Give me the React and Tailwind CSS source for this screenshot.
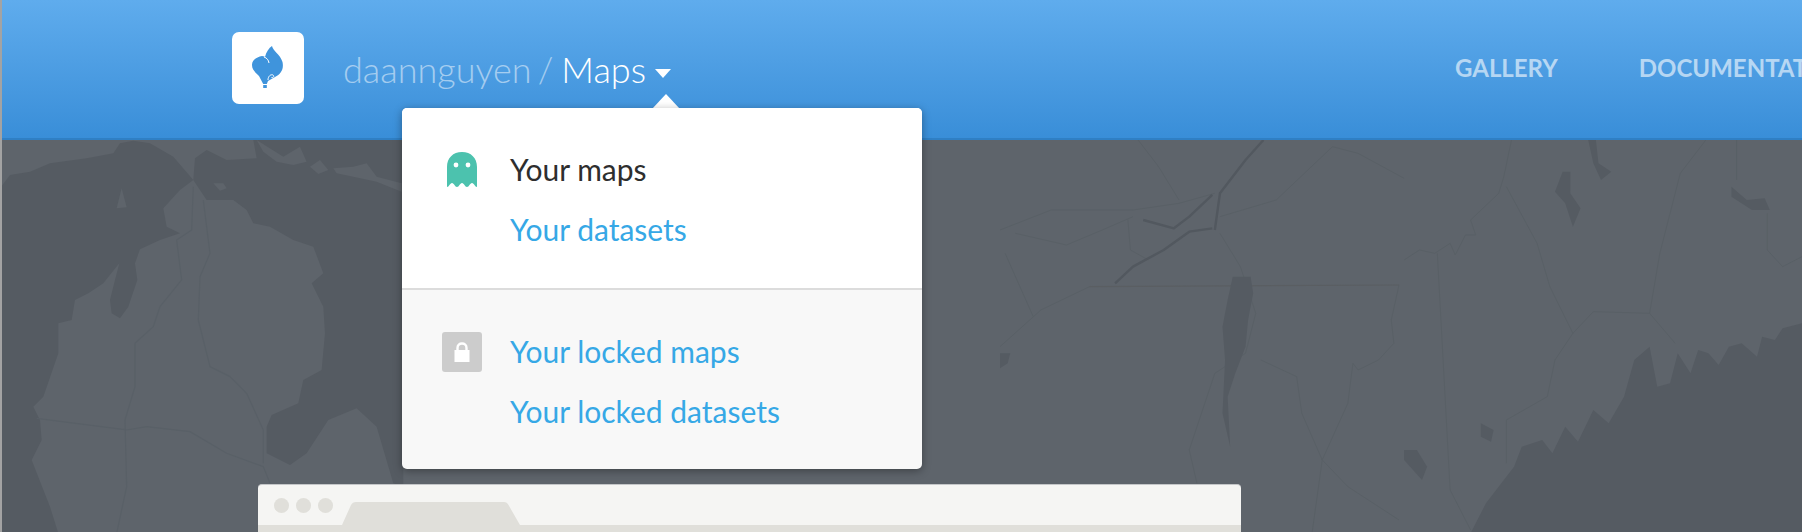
import React from 'react';

const fontLato = { fontFamily: 'Lato, "Open Sans", sans-serif' };

// left half of the map, in crop units
const leftWater = [
  'M0 205 L30 165 L90 155 L150 130 L260 115 L340 100 L360 70 L400 62 L450 70 L520 110 L580 180 L540 210 L490 265 L500 320 L540 340 L480 360 L420 388 L405 430 L412 480 L385 560 L360 595 L335 580 L330 540 L345 480 L358 430 L310 490 L265 520 L225 540 L215 600 L175 610 L175 700 L130 830 L100 860 L120 900 L125 960 L95 1020 L150 1160 L175 1240 L0 1240 Z',
  'M580 180 L585 115 L620 90 L680 120 L770 115 L760 60 L1210 60 L1210 1100 L1180 1090 L1130 920 L1070 865 L985 900 L920 1000 L870 1035 L800 1000 L800 920 L815 885 L895 850 L910 780 L965 750 L975 640 L970 560 L935 490 L970 460 L940 380 L880 360 L810 320 L760 310 L740 270 L700 240 L620 240 Z',
];
const leftLand = [
  'M350 265 L365 205 L380 262 Z',
  'M640 190 L670 190 L680 205 L660 212 Z',
  'M770 60 L850 110 L900 80 L920 125 L880 135 L830 125 L790 95 Z',
  'M930 140 L960 120 L985 150 L955 162 Z',
  'M1000 145 L1060 140 L1100 130 L1130 170 L1205 190 L1205 215 L1130 185 L1060 170 L1010 160 Z',
];
const leftLines = [
  'M580 200 L575 330 L530 360 L545 480 L480 560 L460 620 L405 670 L405 800 L375 900 L380 1100 L350 1240',
  'M610 240 L630 400 L600 470 L595 600 L630 740 L690 770 L740 820 L790 930 L790 1030',
  'M110 895 L380 930 L440 920 L570 935 L680 1000 L790 1040 L810 1090',
];

// right half of the map, in crop units
const rightSea = 'M1568 610 L1530 625 L1515 660 L1490 650 L1480 710 L1450 670 L1425 680 L1405 735 L1385 700 L1365 690 L1350 760 L1325 700 L1310 790 L1285 800 L1270 680 L1240 720 L1220 830 L1190 910 L1160 870 L1130 965 L1105 920 L1080 1000 L1060 960 L1020 980 L1005 1040 L985 1080 L950 1150 L920 1240 L1568 1240 Z';
const rightLakes = [
  'M455 470 L490 470 L495 520 L485 600 L480 680 L460 760 L445 830 L450 980 L435 880 L440 720 L435 620 L445 540 Z',
  'M1150 60 L1165 60 L1170 130 L1195 155 L1175 180 L1160 130 Z',
  'M1100 155 L1115 155 L1115 220 L1135 265 L1120 320 L1105 250 L1085 215 Z',
  'M1430 200 L1460 240 L1495 235 L1505 270 L1470 270 L1430 230 Z',
  'M940 910 L965 930 L960 965 L940 950 Z',
  'M790 990 L815 990 L835 1040 L825 1080 L790 1020 Z',
  'M0 700 L20 700 L15 730 L0 745 Z',
];
const rivers = [
  'M515 60 L480 120 L430 220 L420 330',
  'M225 490 L260 440 L320 390 L370 335 L415 325',
  'M280 300 L340 325 L370 290 L415 225',
];
const rightLines = [
  'M790 420 L820 390 L850 400 L880 370 L890 405 L910 345 L930 345 L920 300 L975 220 L985 170 L1000 60',
  'M780 495 L765 600 L770 670 L740 720 L700 750 L690 730 L680 850 L630 1020 L610 1240',
  'M510 720 L580 770 L590 880 L630 1020 L680 1100 L780 1200',
  'M990 200 L1050 370 L1075 500 L1120 640 L1085 720 L1070 830 L990 900 L990 1030',
  'M1120 640 L1160 575 L1270 580 L1290 400 L1330 160 L1380 60',
  'M1270 580 L1320 670',
  'M1440 60 L1440 180',
  'M1500 280 L1500 390 L1530 440 L1568 410',
  'M0 330 L100 270 L260 270 L350 250 L420 220',
  'M30 340 L130 375 L200 330 L260 290',
  'M250 300 L255 390 L290 420',
  'M270 60 L310 140 L350 240',
  'M430 290 L540 240 L650 80 L700 100 L790 175',
  'M430 340 L470 440 L500 580 L480 700 L420 760 L370 990 L385 1090',
  'M0 680 L80 570 L175 500',
  'M10 400 L65 590',
  'M855 400 L880 1110 L920 1230',
];

const MapBackground = () => (
  <svg className="absolute left-[-2px] top-0 blur-[0.7px]" width="1802" height="532" viewBox="0 0 1802 532">
    <rect width="1802" height="532" fill="#5e646b" />
    <g transform="translate(0 120) scale(0.3333)" strokeLinejoin="round">
      {leftWater.map((d) => <path key={d} d={d} fill="#555b62" />)}
      {leftLand.map((d) => <path key={d} d={d} fill="#5e646b" />)}
      {leftLines.map((d) => (
        <path key={d} d={d} fill="none" stroke="#596067" strokeWidth="1.2" vectorEffect="non-scaling-stroke" />
      ))}
    </g>
    <g transform="translate(1000 120) scale(0.5115 0.3333)" strokeLinejoin="round">
      <path d={rightSea} fill="#555b62" />
      {rightLines.map((d) => (
        <path key={d} d={d} fill="none" stroke="#596066" strokeWidth="1" vectorEffect="non-scaling-stroke" />
      ))}
      <path d="M175 500 L780 495" fill="none" stroke="#5a5e62" strokeWidth="1.2" vectorEffect="non-scaling-stroke" />
      {rightLakes.map((d) => <path key={d} d={d} fill="#555b62" />)}
      {rivers.map((d) => (
        <path key={d} d={d} fill="none" stroke="#52585f" strokeWidth="2.4" vectorEffect="non-scaling-stroke" />
      ))}
    </g>
  </svg>
);

const Logo = () => (
  <div className="w-[72px] h-[72px] bg-white rounded-[7px] shrink-0">
    <svg width="72" height="72" viewBox="0 0 72 72">
      <path
        d="M40 14 C41 19 48 22 50.5 30 C52 37 49 42 43 45 L36 49 L34.8 52 L31.2 52 L27 44 C24 41 20 38 20 33 C20 28 25 25 30 24 C32 24 33 25 33 25 C34 20 37 16 40 14 Z"
        fill="#3f94dc"
      />
      <path d="M32 25 C35 26 36.5 28 37 31" fill="none" stroke="#ffffff" strokeWidth="1" />
      <path d="M36 48 C36 44 39 42 41 43 C42.5 44 41.5 46 39.5 45.5" fill="none" stroke="#ffffff" strokeWidth="1" />
      <rect x="31.2" y="53" width="3.6" height="3" fill="#3f94dc" />
    </svg>
  </div>
);

const Ghost = () => (
  <svg width="30" height="36" viewBox="0 0 30 36" className="shrink-0">
    <path
      d="M0 15 C0 6 6 0 15 0 C24 0 30 6 30 15 L30 35 C28 35 27 31 25 31 C23 31 22 35 20 35 C18 35 17 31 15 31 C13 31 12 35 10 35 C8 35 7 31 5 31 C3 31 2 35 0 35 Z"
      fill="#4cc2ae"
    />
    <circle cx="9" cy="13" r="2.4" fill="#ffffff" />
    <circle cx="21" cy="13" r="2.4" fill="#ffffff" />
  </svg>
);

const LockBadge = () => (
  <div className="w-[40px] h-[40px] bg-[#cccccc] rounded-[3px] flex items-center justify-center shrink-0">
    <svg width="16" height="20" viewBox="0 0 16 20">
      <path d="M3.5 9 L3.5 6 C3.5 3 5.5 1.5 8 1.5 C10.5 1.5 12.5 3 12.5 6 L12.5 9" fill="none" stroke="#ffffff" strokeWidth="2.4" />
      <rect x="0.5" y="8" width="15" height="12" fill="#ffffff" />
    </svg>
  </div>
);

const MenuRow = ({ icon, active, children }) => (
  <div className="flex items-center h-[60px]">
    <div className="w-[108px] pl-[40px] flex items-center shrink-0">{icon}</div>
    <span className={`text-[30px] leading-none pb-[3px] ${active ? 'text-[#2e2e2e]' : 'text-[#36a8e6]'}`}>{children}</span>
  </div>
);

const Dropdown = () => (
  <div className="absolute left-[400px] top-[108px] w-[520px] h-[361px] z-10" style={fontLato}>
    <svg className="absolute left-[250px] top-[-14px]" width="28" height="15" viewBox="0 0 28 15">
      <path d="M0 15 L14 0 L28 15 Z" fill="#ffffff" />
    </svg>
    <div className="relative h-full bg-[#f8f8f8] rounded-[5px] overflow-hidden shadow-[0_2px_8px_rgba(0,0,0,0.35)]">
      <div className="bg-white pt-[32px] pb-[28px] border-b-2 border-[#dcdcdc]">
        <MenuRow icon={<div className="pl-[5px]"><Ghost /></div>} active>Your maps</MenuRow>
        <MenuRow>Your datasets</MenuRow>
      </div>
      <div className="pt-[32px]">
        <MenuRow icon={<LockBadge />}>Your locked maps</MenuRow>
        <MenuRow>Your locked datasets</MenuRow>
      </div>
    </div>
  </div>
);

const BrowserMock = () => (
  <div className="relative ml-[256px] w-[983px] pt-[344px]">
    <div className="rounded-t-[4px] border-t border-[#c4c6c8] bg-[#f5f5f3]">
      <div className="flex items-end h-[40px]">
        <div className="flex self-start pt-[13px] pl-[16px] gap-[7px] w-[84px]">
          <span className="w-[15px] h-[15px] rounded-full bg-[#e0dfda] shrink-0" />
          <span className="w-[15px] h-[15px] rounded-full bg-[#e0dfda] shrink-0" />
          <span className="w-[15px] h-[15px] rounded-full bg-[#e0dfda] shrink-0" />
        </div>
        <svg width="180" height="23" viewBox="0 0 180 23">
          <path d="M0 23 L9 3 Q10.5 0 14 0 L162 0 Q165 0 166.5 3 L178 23 Z" fill="#e0dfda" />
        </svg>
      </div>
      <div className="h-[10px] bg-[#e0dfda]" />
    </div>
  </div>
);

const App = () => {
  return (
    <div className="relative w-full h-[532px] overflow-hidden border-l-2 border-[#a3a3a3] bg-[#5e646b]" style={fontLato}>
      <MapBackground />
      <header className="relative h-[140px] flex items-start bg-gradient-to-b from-[#5faced] to-[#398ed8] border-b-2 border-[#2f7fc4] pt-[32px] pl-[230px]">
        <Logo />
        <div className="flex items-baseline w-[340px] ml-[39px] mt-[10px] whitespace-nowrap shrink-0">
          <span className="text-[36px] font-light text-white/50">daannguyen</span>
          <span className="text-[36px] font-light text-white/50 ml-[6px]">/</span>
          <span className="text-[36px] font-light text-white ml-[8px]">Maps</span>
          <svg className="ml-[9px] self-center mt-[8px]" width="16" height="9" viewBox="0 0 16 9">
            <path d="M0 0 L16 0 L8 9 Z" fill="#ffffff" />
          </svg>
        </div>
        <nav className="flex gap-[81px] ml-[772px] mt-[18px] text-[24px] font-bold text-white/60 whitespace-nowrap shrink-0">
          <span>GALLERY</span>
          <span>DOCUMENTATION</span>
        </nav>
      </header>
      <Dropdown />
      <BrowserMock />
    </div>
  );
};

export default App;
